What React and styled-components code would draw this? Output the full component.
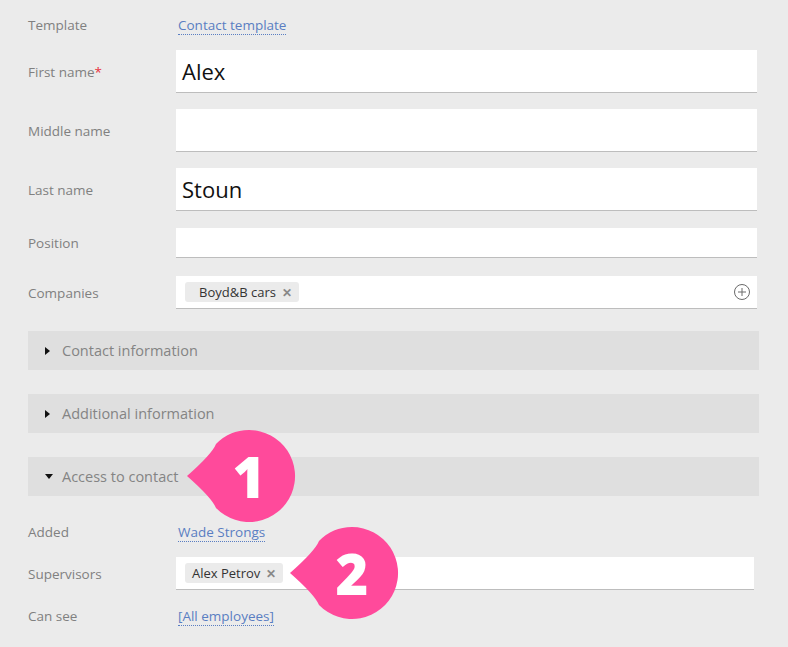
import styled, { createGlobalStyle } from 'styled-components'

const GlobalStyle = createGlobalStyle`
  html, body {
    margin: 0;
    padding: 0;
    background: #ebebeb;
  }
  body {
    font-family: "Open Sans", "Liberation Sans", sans-serif;
  }
`

const Page = styled.div`
  position: relative;
  width: 788px;
  height: 647px;
  box-sizing: border-box;
  padding: 12px 29px 0 28px;
  display: flex;
  flex-direction: column;
  overflow: hidden;
`

const Row = styled.div`
  display: grid;
  grid-template-columns: 148px 1fr;
  align-items: center;
  height: ${p => p.$h}px;
  margin-top: ${p => p.$mt || 0}px;
  padding-right: ${p => p.$pr || 2}px;
`

const Label = styled.div`
  font-size: 13.5px;
  color: #808080;
  .req {
    color: #e8303c;
  }
`

const Link = styled.span`
  justify-self: start;
  margin-left: 2px;
  font-size: 13.5px;
  color: #5a7ec2;
  line-height: 18px;
  border-bottom: 1px dotted #5a7ec2;
`

const Input = styled.div`
  height: 100%;
  box-sizing: border-box;
  background: #fff;
  border-bottom: 1px solid #bdbdbd;
  display: flex;
  align-items: center;
  padding: 0 6px 0 6px;
  font-size: 22px;
  color: #111;
`

const Tag = styled.span`
  display: inline-flex;
  align-items: center;
  height: 20px;
  margin-left: 3px;
  border-radius: 3px;
  background: #ebebeb;
  padding: 0 7px 0 ${p => p.$pl}px;
  font-size: 13px;
  color: #333;
  gap: 6px;
  .x {
    color: #888;
    font-size: 12px;
    font-weight: 700;
  }
`

const Section = styled.div`
  height: 39px;
  margin-top: ${p => p.$mt}px;
  background: #dfdfdf;
  display: flex;
  align-items: center;
  padding-left: 17px;
  font-size: 14.5px;
  color: #848484;
  gap: 8px;
`

const Arrow = styled.span`
  width: 0;
  height: 0;
  ${p => p.$open
    ? `border-left: 4px solid transparent; border-right: 4px solid transparent; border-top: 5px solid #111; margin-right: 1px;`
    : `border-top: 4px solid transparent; border-bottom: 4px solid transparent; border-left: 5px solid #111; margin-right: 4px;`}
`

const Spacer = styled.div`
  flex: 1;
`

const Callout = styled.div`
  position: absolute;
  left: ${p => p.$x}px;
  top: ${p => p.$y}px;
  width: 112px;
  height: 96px;
  svg {
    position: absolute;
    inset: 0;
  }
  span {
    position: absolute;
    left: 17px;
    top: 0;
    width: 92px;
    height: 96px;
    display: flex;
    align-items: center;
    justify-content: center;
    font-family: "Open Sans", "DejaVu Sans", sans-serif;
    font-weight: 800;
    font-size: 56px;
    color: #fff;
    line-height: 1;
  }
`

function Bubble({ x, y, n }) {
  return (
    <Callout $x={x} $y={y}>
      <svg width="112" height="96" viewBox="0 0 112 96">
        <path
          d="M63 2 A46 46 0 1 1 30 80 Q26 70 1 48 Q26 26 30 16 A46 46 0 0 1 63 2 Z"
          fill="#ff4a9b"
        />
      </svg>
      <span>{n}</span>
    </Callout>
  )
}

export default function App() {
  return (
    <>
      <GlobalStyle />
      <Page>
        <Row $h={26}>
          <Label>Template</Label>
          <Link>Contact template</Link>
        </Row>
        <Row $h={43} $mt={12}>
          <Label>First name<span className="req">*</span></Label>
          <Input>Alex</Input>
        </Row>
        <Row $h={43} $mt={16}>
          <Label>Middle name</Label>
          <Input />
        </Row>
        <Row $h={43} $mt={16}>
          <Label>Last name</Label>
          <Input>Stoun</Input>
        </Row>
        <Row $h={30} $mt={17}>
          <Label>Position</Label>
          <Input />
        </Row>
        <Row $h={33} $mt={18}>
          <Label>Companies</Label>
          <Input>
            <Tag $pl={14}>Boyd&amp;B cars <span className="x">✕</span></Tag>
            <Spacer />
            <svg width="18" height="18" viewBox="0 0 18 18">
              <circle cx="9" cy="9" r="7.5" fill="none" stroke="#6a6a6a" strokeWidth="1" />
              <path d="M9 5v8M5 9h8" stroke="#6a6a6a" strokeWidth="1" />
            </svg>
          </Input>
        </Row>
        <Section $mt={22}><Arrow />Contact information</Section>
        <Section $mt={24}><Arrow />Additional information</Section>
        <Section $mt={24}><Arrow $open />Access to contact</Section>
        <Row $h={24} $mt={24}>
          <Label>Added</Label>
          <Link>Wade Strongs</Link>
        </Row>
        <Row $h={33} $mt={13} $pr={5}>
          <Label>Supervisors</Label>
          <Input>
            <Tag $pl={7}>Alex Petrov <span className="x">✕</span></Tag>
          </Input>
        </Row>
        <Row $h={24} $mt={14}>
          <Label>Can see</Label>
          <Link>[All employees]</Link>
        </Row>
        <Bubble x={186} y={428} n="1" />
        <Bubble x={289} y={525} n="2" />
      </Page>
    </>
  )
}
